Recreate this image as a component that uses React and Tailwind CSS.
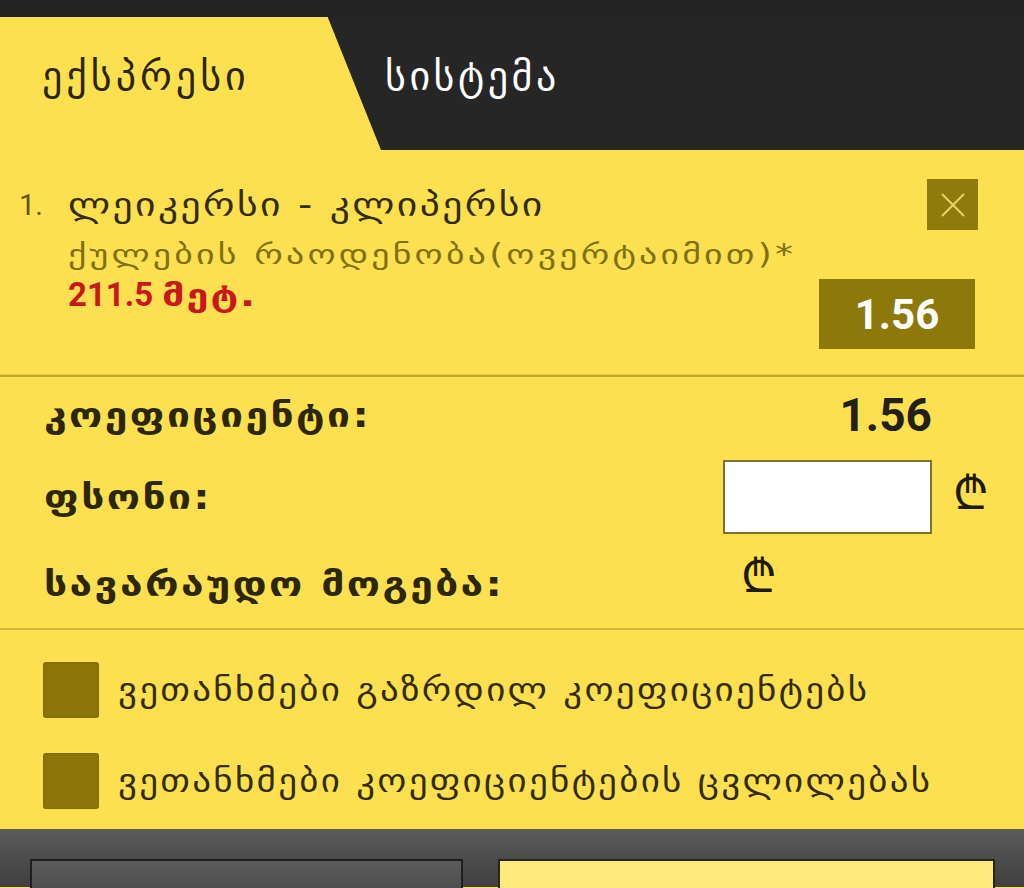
import React from 'react';

const font = { fontFamily: 'Roboto, "DejaVu Sans", sans-serif' };
const geo = { fontFamily: '"DejaVu Sans", sans-serif' };

const Lari = () => (
  <span className="text-[46px] leading-none text-[#1d1a08]" style={geo}>
    ₾
  </span>
);

const Checkbox = ({ label }) => (
  <label className="flex items-center gap-[19px]">
    <span className="w-[56px] h-[56px] rounded-[3px] bg-[#8c7607] shadow-[inset_0_0_2px_rgba(0,0,0,0.25)] flex-shrink-0" />
    <span className="inline-block origin-left scale-x-[1.155] whitespace-nowrap text-[32px] tracking-[2px] text-[#332d07]" style={geo}>{label}</span>
  </label>
);

const Label = ({ children }) => (
  <div className="flex-1">
    <span className="inline-block origin-left scale-x-[1.2] whitespace-nowrap font-bold text-[34px] tracking-[2px] text-[#2c2709]" style={geo}>
      {children}
    </span>
  </div>
);

export default function App() {
  return (
    <div className="w-[1024px] h-[888px] overflow-hidden bg-[#fde04f]" style={font}>
      {/* top bar */}
      <div className="h-[17px] bg-[#242424]" />

      {/* tabs */}
      <div className="flex h-[133px] bg-[#262626]">
        <div className="w-[381px] bg-[#fde04f] [clip-path:polygon(0_0,86%_0,100%_100%,0_100%)] flex items-center pl-[42px] pb-[16px]">
          <span className="text-[40px] text-[#2b2608] tracking-[4px]" style={geo}>
            ექსპრესი
          </span>
        </div>
        <div className="flex items-center pl-[4px] pb-[16px]">
          <span className="text-[40px] text-white tracking-[3.5px]" style={geo}>
            სისტემა
          </span>
        </div>
      </div>

      {/* selected event */}
      <div className="relative h-[224px] pt-[29px]">
        <div className="flex">
          <span className="w-[68px] pl-[19px] text-[29px] text-[#62560f] leading-[52px]">1.</span>
          <div className="flex flex-col items-start">
            <span className="inline-block origin-left scale-x-[1.2] whitespace-nowrap text-[33px] tracking-[2px] leading-[52px] text-[#332d07]" style={geo}>ლეიკერსი - კლიპერსი</span>
            <span className="inline-block origin-left scale-x-[1.28] whitespace-nowrap text-[28px] tracking-[2.5px] leading-[48px] text-[#7f7013]" style={geo}>ქულების რაოდენობა(ოვერტაიმით)*</span>
            <span className="leading-[32px] font-bold text-[#c9171e] whitespace-nowrap">
              <span className="text-[33px]">211.5 </span>
              <span className="inline-block origin-left scale-x-[1.28] text-[31px] tracking-[1.5px]" style={geo}>მეტ.</span>
            </span>
          </div>
        </div>
        <button className="absolute left-[927px] top-[29px] w-[51px] h-[51px] bg-[#8f7a0c] flex items-center justify-center">
          <svg width="26" height="26" viewBox="0 0 26 26">
            <path d="M2 2L24 24M24 2L2 24" stroke="#e8d36a" strokeWidth="2" />
          </svg>
        </button>
        <div className="absolute left-[819px] top-[129px] w-[156px] h-[70px] bg-[#8d790a] flex items-center justify-center text-white font-bold text-[42px]">
          1.56
        </div>
      </div>

      {/* divider */}
      <div className="h-[1px] bg-[#e6cb42]" />
      <div className="h-[2px] bg-[#c0a836]" />

      {/* summary */}
      <div className="pl-[44px] flex flex-col">
        <div className="h-[76px] flex items-center">
          <Label>კოეფიციენტი:</Label>
          <span className="w-[209px] text-right font-bold text-[46px] text-[#222018]">1.56</span>
          <span className="w-[92px]" />
        </div>
        <div className="h-[88px] flex items-center">
          <Label>ფსონი:</Label>
          <input className="w-[209px] h-[74px] bg-white border-2 border-[#7b7232] outline-none" />
          <span className="w-[92px] pl-[21px] pb-[8px]"><Lari /></span>
        </div>
        <div className="h-[87px] flex items-center">
          <Label>სავარაუდო მოგება:</Label>
          <span className="w-[209px] pl-[18px] pb-[18px]"><Lari /></span>
          <span className="w-[92px]" />
        </div>
      </div>

      {/* divider */}
      <div className="h-[2px] bg-[#d2b63c]" />

      {/* agreements */}
      <div className="h-[199px] pl-[43px] pt-[32px] flex flex-col gap-[35px]">
        <Checkbox label="ვეთანხმები გაზრდილ კოეფიციენტებს" />
        <Checkbox label="ვეთანხმები კოეფიციენტების ცვლილებას" />
      </div>

      {/* bottom bar */}
      <div className="h-[58px] bg-gradient-to-b from-[#5b5b5b] to-[#3f3f3f] flex gap-[35px] pl-[30px] pt-[30px]">
        <div className="w-[433px] h-[40px] border-2 border-[#1f1f1f] bg-gradient-to-b from-[#5c5c5c] to-[#4a4a4a]" />
        <div className="w-[497px] h-[40px] border-2 border-[#2a2610] bg-[#fde97c]" />
      </div>
    </div>
  );
}
